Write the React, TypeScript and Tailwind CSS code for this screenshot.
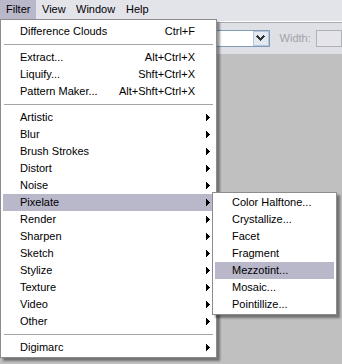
import React from "react";

type Item = { label: string; shortcut?: string; sub?: boolean; active?: boolean } | "sep";

const mainItems: Item[] = [
  { label: "Difference Clouds", shortcut: "Ctrl+F" },
  "sep",
  { label: "Extract...", shortcut: "Alt+Ctrl+X" },
  { label: "Liquify...", shortcut: "Shft+Ctrl+X" },
  { label: "Pattern Maker...", shortcut: "Alt+Shft+Ctrl+X" },
  "sep",
  { label: "Artistic", sub: true },
  { label: "Blur", sub: true },
  { label: "Brush Strokes", sub: true },
  { label: "Distort", sub: true },
  { label: "Noise", sub: true },
  { label: "Pixelate", sub: true, active: true },
  { label: "Render", sub: true },
  { label: "Sharpen", sub: true },
  { label: "Sketch", sub: true },
  { label: "Stylize", sub: true },
  { label: "Texture", sub: true },
  { label: "Video", sub: true },
  { label: "Other", sub: true },
  "sep",
  { label: "Digimarc", sub: true },
];

const subItems = [
  { label: "Color Halftone..." },
  { label: "Crystallize..." },
  { label: "Facet" },
  { label: "Fragment" },
  { label: "Mezzotint...", active: true },
  { label: "Mosaic..." },
  { label: "Pointillize..." },
];

const Arrow = () => (
  <svg width="4" height="7" viewBox="0 0 4 7" shapeRendering="crispEdges">
    <polygon points="0,0 4,3.5 0,7" fill="#000" />
  </svg>
);

const MenuRow = ({ item }: { item: Item }) => {
  if (item === "sep") {
    return (
      <div className="h-[9px] flex items-center px-[1px]">
        <div className="h-px w-full bg-[#a5a5a5]" />
      </div>
    );
  }
  return (
    <div
      className={`h-[17px] flex items-center pl-[17px] ${item.active ? "bg-[#b9b8ca]" : ""}`}
    >
      <span className="whitespace-nowrap">{item.label}</span>
      {item.shortcut && <span className="ml-auto whitespace-nowrap">{item.shortcut}</span>}
      <div className={`w-[19px] h-full flex items-center pl-[11px] ${item.shortcut ? "" : "ml-auto"}`}>
        {item.sub && <Arrow />}
      </div>
    </div>
  );
};

export default function App() {
  return (
    <div
      className="relative w-[342px] h-[364px] overflow-hidden flex flex-col bg-[#c0c0c0] text-[11px] text-black"
      style={{ fontFamily: '"Liberation Sans", Arial, sans-serif' }}
    >
      {/* menu bar */}
      <div className="h-[19px] flex items-center bg-[#e3e3ea]">
        <div className="h-full w-[36px] pl-[6px] flex items-center bg-[#b9b8ca]">Filter</div>
        <div className="w-[34px] pl-[6px]">View</div>
        <div className="w-[50px] pl-[6px]">Window</div>
        <div className="pl-[6px]">Help</div>
      </div>
      <div className="h-[2px] bg-[#e3e3ea]" />
      <div className="h-px bg-white" />
      <div className="h-px bg-[#a8a8b0]" />

      {/* options bar */}
      <div className="h-[31px] flex items-center bg-[#dfdfe6] pb-[1px]">
        <div className="ml-[150px] w-[138px] h-[17px] flex bg-white border border-[#7f9db9]">
          <div className="flex-1" />
          <div className="w-[16px] h-full flex items-center justify-center border border-[#b6c4dc] bg-[#e4e8f0]">
            <svg width="9" height="6" viewBox="0 0 9 6" shapeRendering="crispEdges">
              <path d="M1 1 L4.5 4.5 L8 1" stroke="#333" strokeWidth="2" fill="none" />
            </svg>
          </div>
        </div>
        <span className="ml-[10px] text-[#a2a2a8]">Width:</span>
        <div className="ml-[5px] w-[30px] h-[17px] border border-[#b0b0b8] bg-[#e4e4ea]" />
      </div>

      <div className="flex-1" />

      {/* Filter menu */}
      <div className="absolute left-0 top-[19px] w-[217px] bg-white border border-[#8c8c8c] pt-[3px] pb-[1px] px-[2px] shadow-[3px_3px_2px_rgba(0,0,0,0.4)]">
        {mainItems.map((item, i) => (
          <MenuRow key={i} item={item} />
        ))}
      </div>

      {/* Pixelate submenu */}
      <div className="absolute left-[212px] top-[192px] w-[125px] bg-white border border-[#8c8c8c] py-[1px] px-[2px] shadow-[3px_3px_2px_rgba(0,0,0,0.4)]">
        {subItems.map((item, i) => (
          <div
            key={i}
            className={`h-[17px] flex items-center pl-[17px] whitespace-nowrap ${item.active ? "bg-[#b9b8ca]" : ""}`}
          >
            {item.label}
          </div>
        ))}
      </div>
    </div>
  );
}
